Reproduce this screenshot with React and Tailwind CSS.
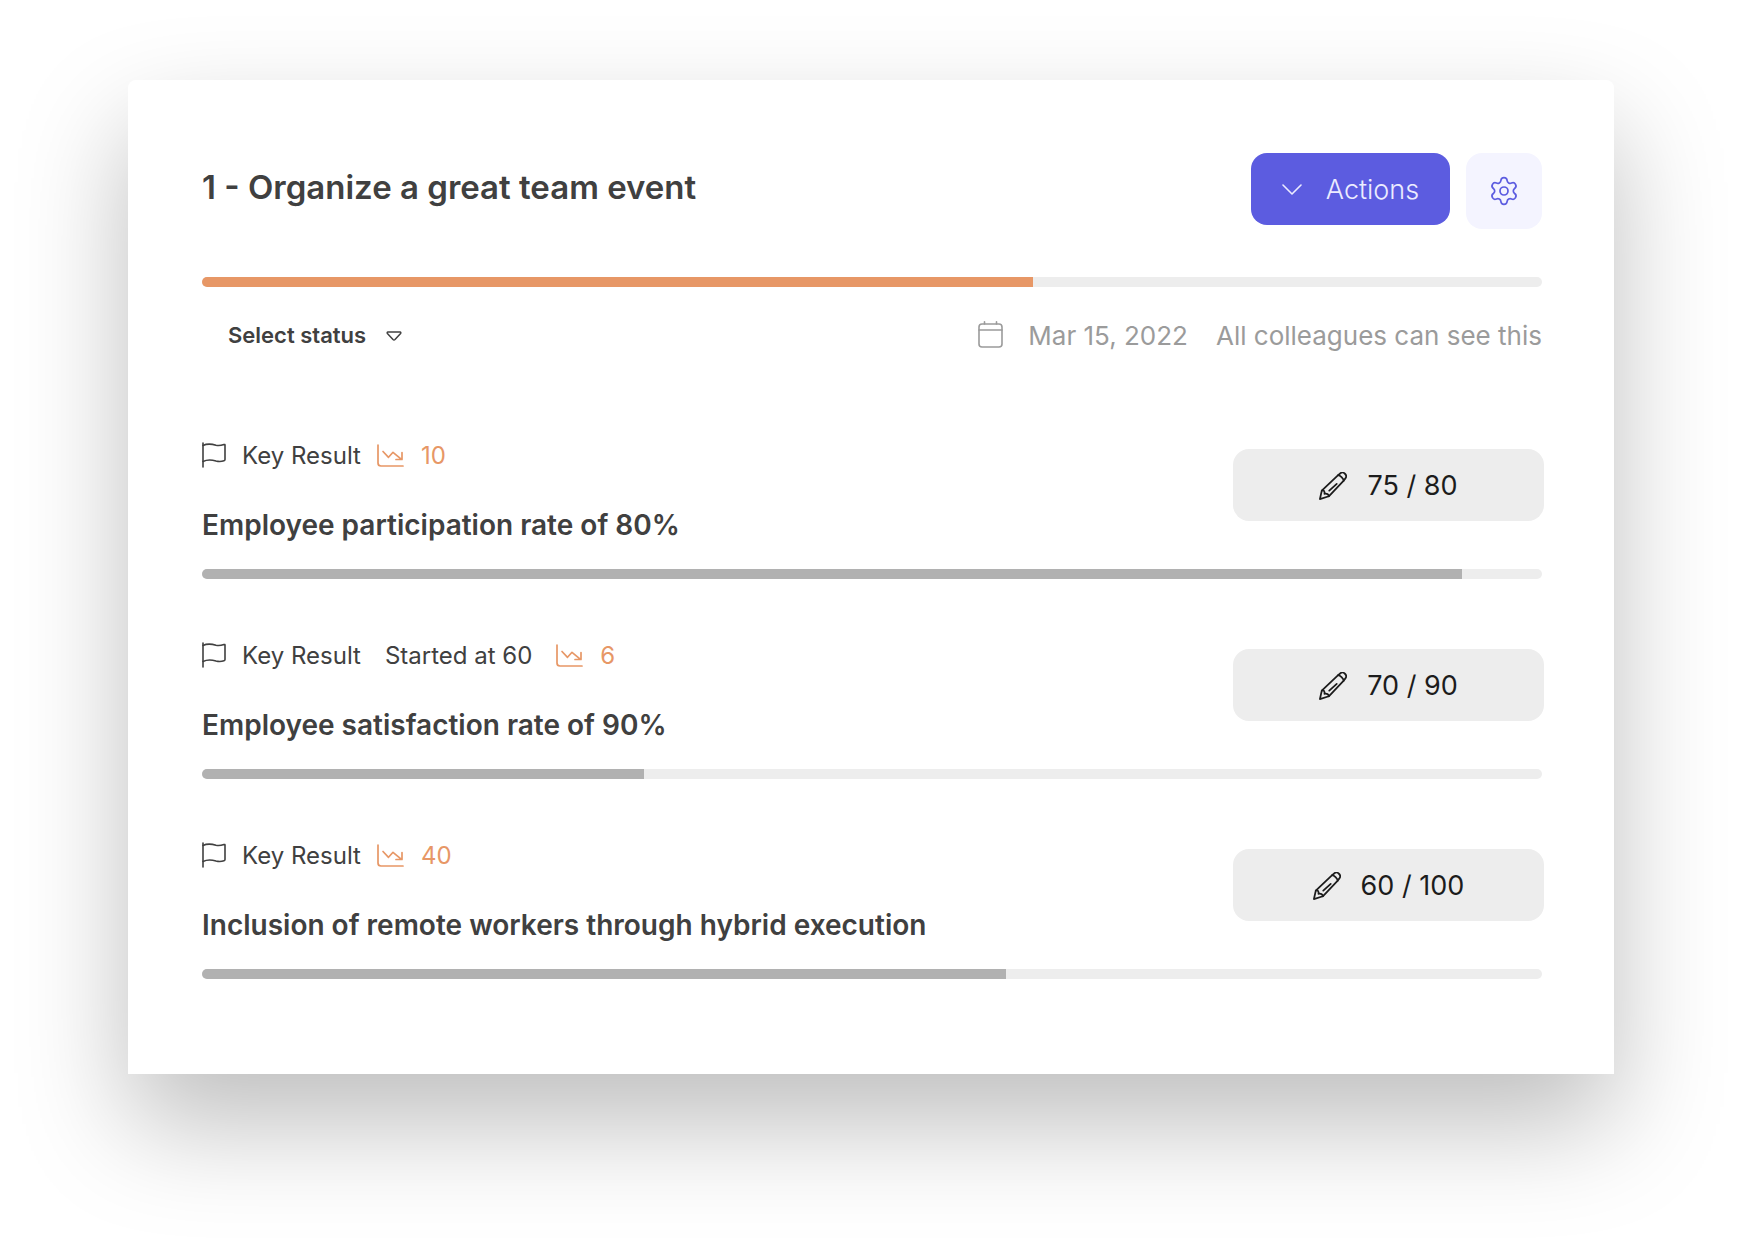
import React, { useState } from 'react'
import { Settings } from 'lucide-react'

const objective = {
  title: '1 - Organize a great team event',
  progress: 62,
  date: 'Mar 15, 2022',
  visibility: 'All colleagues can see this',
}

const keyResults = [
  { id: 1, title: 'Employee participation rate of 80%', started: null, drop: 10, current: 75, target: 80, progress: 94 },
  { id: 2, title: 'Employee satisfaction rate of 90%', started: 60, drop: 6, current: 70, target: 90, progress: 33 },
  { id: 3, title: 'Inclusion of remote workers through hybrid execution', started: null, drop: 40, current: 60, target: 100, progress: 60 },
]

function Icon({ className, viewBox = '0 0 24 24', width = 1, children }) {
  return (
    <svg
      className={className}
      viewBox={viewBox}
      fill="none"
      stroke="currentColor"
      strokeWidth={width}
      strokeLinecap="round"
      strokeLinejoin="round"
      aria-hidden="true"
    >
      {children}
    </svg>
  )
}

function ChevronIcon() {
  return (
    <Icon className="w-5 h-3" viewBox="0 0 20 12" width={1.6}>
      <path d="M1 1l9 9 9-9" />
    </Icon>
  )
}

function CalendarIcon() {
  return (
    <Icon className="w-7 h-7" viewBox="0 0 28 28" width={1.6}>
      <rect x="3" y="3" width="23" height="23" rx="3" />
      <path d="M3 9h23M8.500 .8v2.200M20.500 .8v2.200" />
    </Icon>
  )
}

function FlagIcon() {
  return (
    <Icon className="w-6 h-7" viewBox="0 0 24 28" width={1.6}>
      <path d="M1 1v24" />
      <path d="M1 3.500c5-2.500 9-1.500 13-.3 3 .8 5 .3 8-.7q1-.3 1 .7v14.300q0 1-1 1.300c-3 1-5 1-8 .2-4-1.200-8-2-13 .5" />
    </Icon>
  )
}

function TrendDownIcon() {
  return (
    <Icon className="w-7 h-6" viewBox="0 0 28 24" width={1.7}>
      <path d="M1 1v18a3 3 0 0 0 3 3h22" />
      <path d="M6 7.500l5.500 5.800 4.500-5 8.500 7M25 8.500v7h-6" />
    </Icon>
  )
}

function PencilIcon() {
  return (
    <Icon className="w-7 h-7" viewBox="0 0 30 30" width={1.9}>
      <path d="M1 29l2-9L20.500 3.300l2.500-2c3-2.500 8 2.200 5.300 5.500L26.500 9.200 10.500 26z" />
      <path d="M3 20c2.300-.8 3.200.8 2.900 3.400 2.600-.4 4.600.3 4.600 2.600M20.500 3.300c2.300.5 5.500 3.500 6 5.900M11 20l8-7.200" />
    </Icon>
  )
}

function ProgressBar({ value, color, label }) {
  return (
    <div
      role="progressbar"
      aria-label={label}
      aria-valuenow={value}
      aria-valuemin={0}
      aria-valuemax={100}
      className="h-[10px] w-full rounded-full bg-[#ededed] overflow-hidden"
    >
      <div className={`h-full ${color}`} style={{ width: `${value}%` }} />
    </div>
  )
}

function KeyResult({ item }) {
  return (
    <li className="h-[200px]">
      <div className="flex justify-between items-start">
        <div>
          <div className="flex items-center h-[30px] text-2xl text-[#404040]">
            <FlagIcon />
            <span className="ml-4">Key Result</span>
            {item.started && <span className="ml-6">Started at {item.started}</span>}
            <span className={`flex items-center gap-4 text-[#e79766] ${item.started ? 'ml-6' : 'ml-4'}`}>
              <TrendDownIcon />
              {item.drop}
            </span>
          </div>
          <h2 className="mt-[34px] text-[28px] leading-10 font-semibold text-[#404040]">{item.title}</h2>
        </div>
        <button
          type="button"
          className="flex items-center justify-center gap-5 w-[311px] h-[72px] mt-2 -mr-[2px] pt-[2px] rounded-2xl bg-[#ededed] text-[27px] text-[#1c1c1c]"
        >
          <PencilIcon />
          {item.current} / {item.target}
        </button>
      </div>
      <div className="mt-6">
        <ProgressBar value={item.progress} color="bg-[#b1b1b1]" label={item.title} />
      </div>
    </li>
  )
}

function App() {
  const [status, setStatus] = useState('')

  return (
    <main className="px-32 pt-20 pb-44 bg-white font-['Inter',sans-serif]">
      <section className="pl-[74px] pr-[72px] pt-[73px] pb-[33px] rounded-t-lg bg-white shadow-[0_50px_110px_rgba(0,0,0,0.26)]">
        <header className="flex justify-between items-start h-[124px]">
          <h1 className="mt-3 text-[33px] leading-[44px] font-semibold text-[#404040]">{objective.title}</h1>
          <div className="flex items-start gap-4">
            <button
              type="button"
              className="flex items-center justify-center gap-6 w-[199px] h-[72px] pt-[2px] rounded-2xl bg-[#5c5ce0] text-[27px] font-light text-[#ececff]"
            >
              <ChevronIcon />
              Actions
            </button>
            <button
              type="button"
              aria-label="Settings"
              className="flex items-center justify-center w-[76px] h-[76px] rounded-2xl bg-[#f4f4ff] text-[#5c5ce0]"
            >
              <Settings size={32} strokeWidth={1.3} />
            </button>
          </div>
        </header>

        <ProgressBar value={objective.progress} color="bg-[#e79766]" label={objective.title} />

        <div className="flex justify-between items-center mt-7 h-10">
          <div className="relative ml-[26px]">
            <select
              aria-label="Status"
              value={status}
              onChange={(e) => setStatus(e.target.value)}
              className="appearance-none w-[174px] h-10 bg-transparent text-[22px] font-semibold text-[#404040] outline-none"
            >
              <option value="">Select status</option>
              <option value="on-track">On track</option>
              <option value="at-risk">At risk</option>
              <option value="done">Done</option>
            </select>
            <Icon className="absolute right-0 top-4 w-4 h-[10px] text-[#404040] pointer-events-none" viewBox="0 0 16 10" width={1.5}>
              <path d="M2 1h12c1 0 1 1 .6 1.500L9 8.500q-1 1-2 0L1.400 2.500C1 2 1 1 2 1z" />
            </Icon>
          </div>
          <div className="flex items-center text-[26px] text-[#9b9b9b]">
            <CalendarIcon />
            <span className="ml-6">{objective.date}</span>
            <span className="ml-7">{objective.visibility}</span>
          </div>
        </div>

        <ul className="mt-[86px]">
          {keyResults.map((item) => (
            <KeyResult key={item.id} item={item} />
          ))}
        </ul>
      </section>
    </main>
  )
}

export default App
